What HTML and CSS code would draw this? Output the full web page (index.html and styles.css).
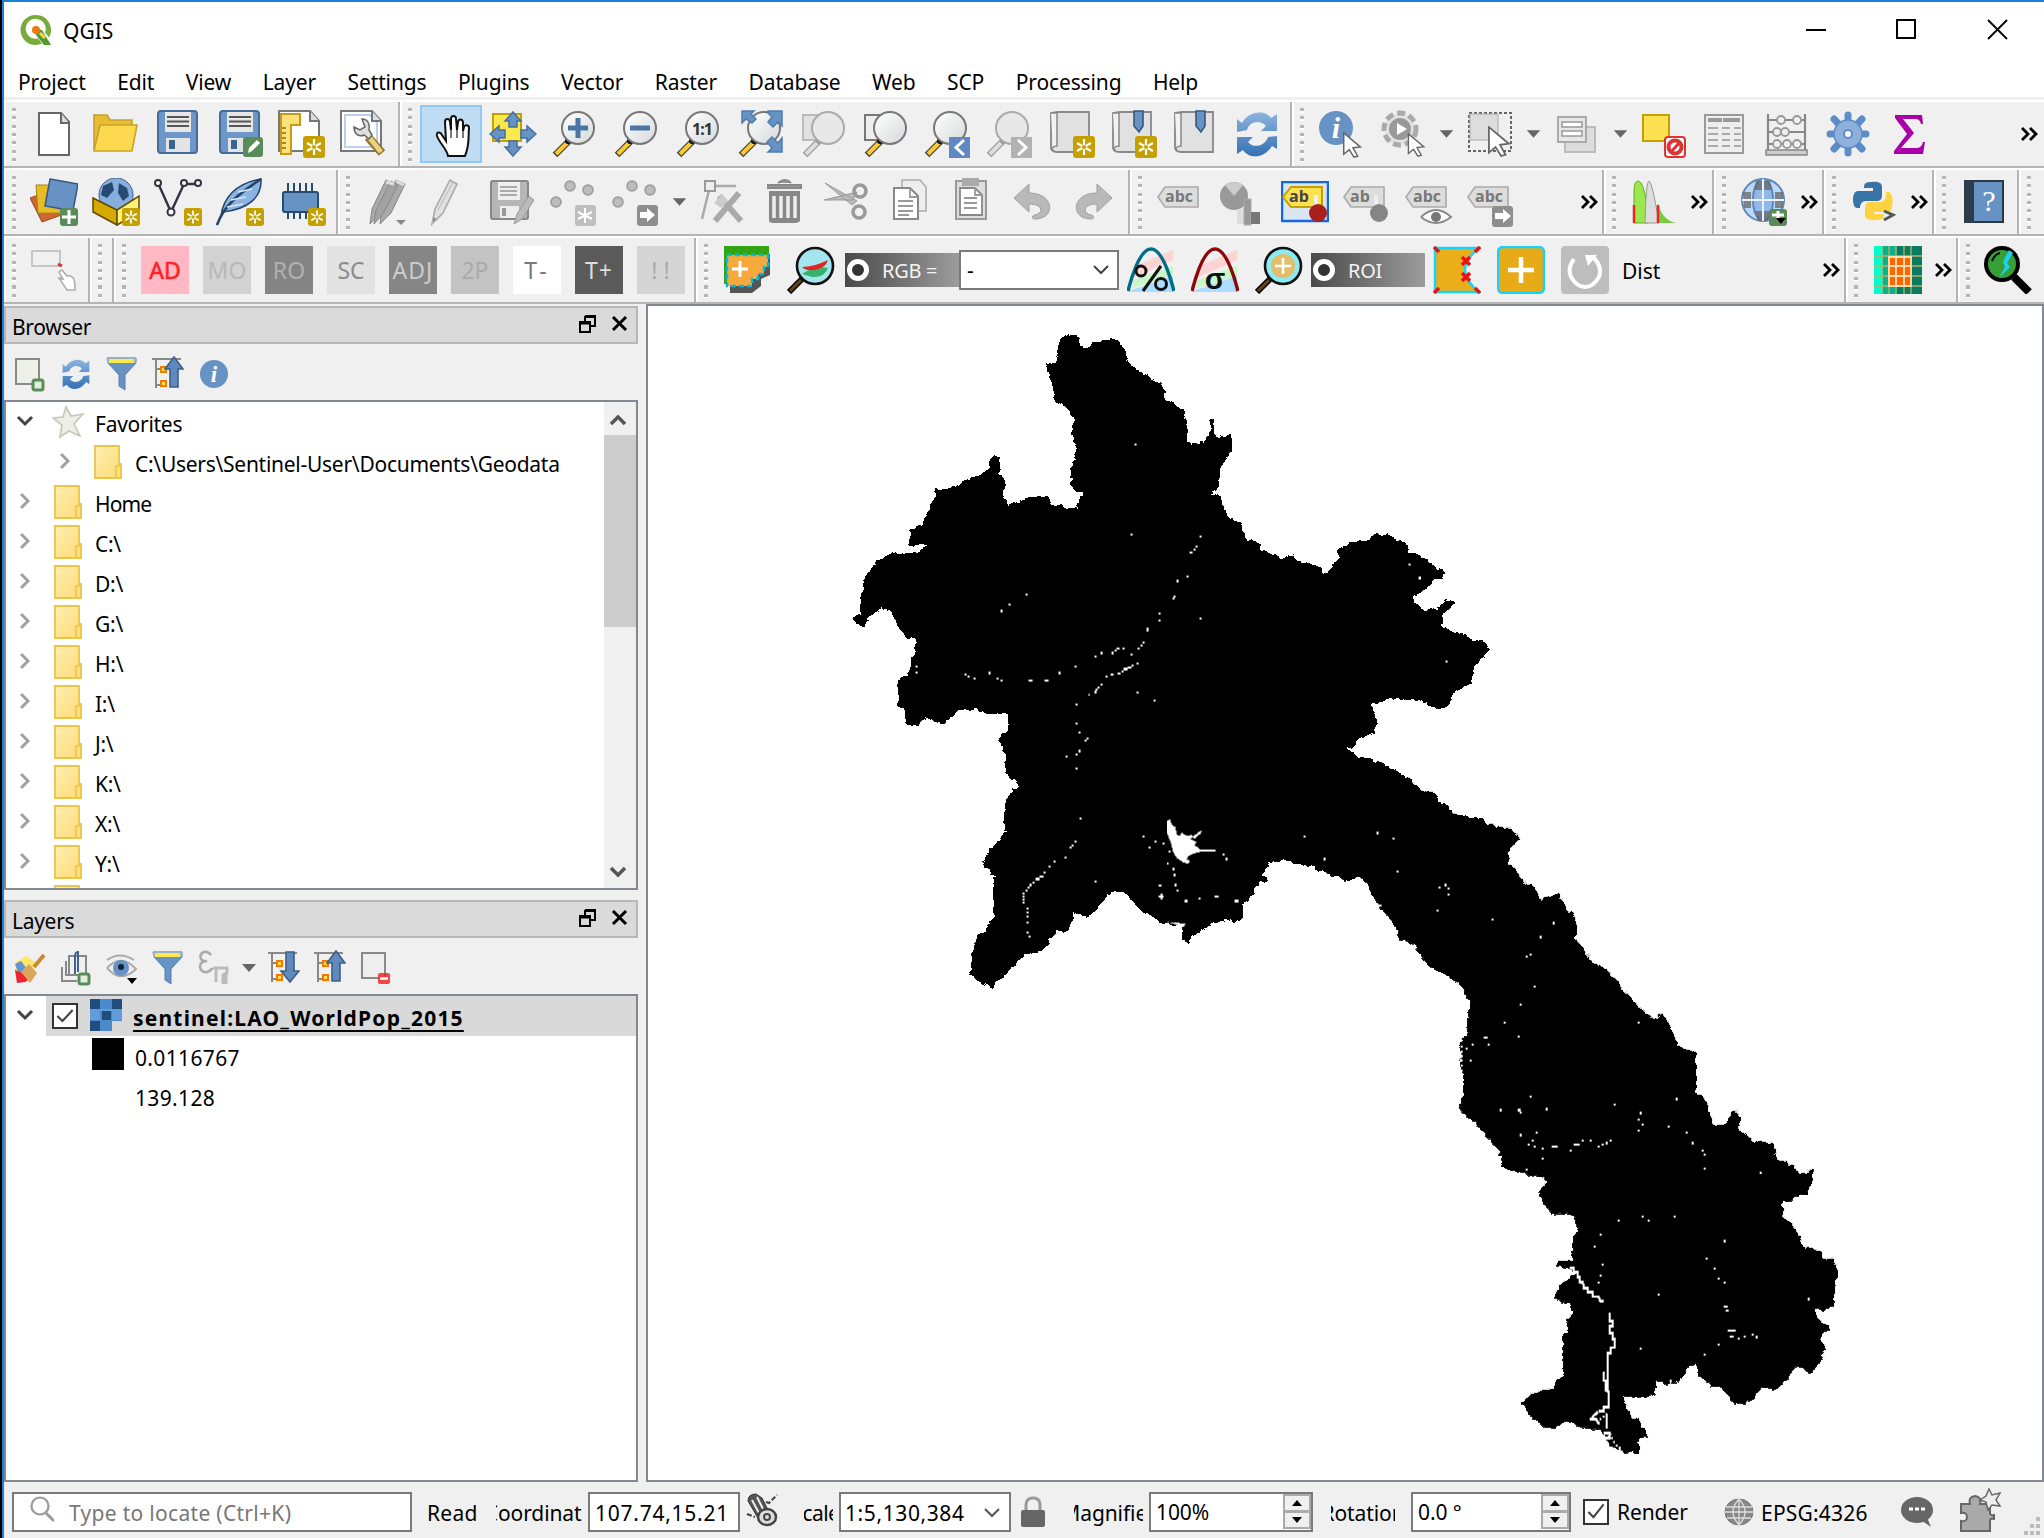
FILE: index.html
```html
<!DOCTYPE html>
<html lang="en">
<head>
<meta charset="utf-8">
<title>QGIS</title>
<link rel="stylesheet" href="styles.css">
</head>
<body>
<svg class="defs" width="0" height="0">
  <linearGradient id="glass" x1="0" y1="0" x2="1" y2="1"><stop offset="0" stop-color="#fff"/><stop offset="1" stop-color="#d5d9da"/></linearGradient>
  <linearGradient id="fold" x1="0" y1="0" x2="1" y2="1"><stop offset="0" stop-color="#ffeeb0"/><stop offset="1" stop-color="#fddc78"/></linearGradient>
  <linearGradient id="blue" x1="0" y1="0" x2="0" y2="1"><stop offset="0" stop-color="#8db4de"/><stop offset="1" stop-color="#3470b4"/></linearGradient>
  <symbol id="star-badge" viewBox="0 0 22 22"><rect width="22" height="22" rx="3" fill="#c4a000"/><path d="M11 3v16M4 7l14 8M18 7L4 15" stroke="#fff" stroke-width="2.2"/><circle cx="11" cy="11" r="2" fill="#c4a000"/></symbol>
  <symbol id="lens" viewBox="0 0 48 48"><path d="M4 45L19 30" stroke="#444" stroke-width="6.5"/><path d="M5 44L16 33" stroke="#fcc92b" stroke-width="4"/><circle cx="17" cy="31" r="3" fill="#111"/><circle cx="27" cy="18" r="16" fill="url(#glass)" stroke="#777" stroke-width="2"/></symbol>
  <symbol id="lens-off" viewBox="0 0 48 48"><path d="M4 45L19 30" stroke="#999" stroke-width="6.5"/><path d="M5 44L16 33" stroke="#ddd" stroke-width="4"/><circle cx="27" cy="18" r="16" fill="#e8e8e8" stroke="#aaa" stroke-width="2"/></symbol>
  <symbol id="floppy" viewBox="0 0 48 48"><rect x="5" y="1" width="39" height="42" rx="3" fill="#6d97c8" stroke="#456c99" stroke-width="2"/><rect x="12" y="2" width="26" height="20" fill="#e7e7e7"/><path d="M14 7h22M14 11.500h22M14 16h22" stroke="#555" stroke-width="1.800"/><rect x="13" y="28" width="24" height="14" fill="#e4e4e4"/><rect x="16" y="30" width="6" height="9" fill="#3b6391"/></symbol>
  <symbol id="page" viewBox="0 0 48 48"><path d="M10 3h22l8 9v33H10z" fill="#fff" stroke="#666" stroke-width="2"/><path d="M32 3v10h8" fill="#ddd" stroke="#666" stroke-width="2"/></symbol>
  <symbol id="refresh" viewBox="0 0 48 48"><path d="M4 22V9l5 4C16 0 33 0 38 8l6-4v17H28l5-5c-6-7-17-4-19 4zM44 26v13l-5-3c-8 13-23 13-29 4l-6 4V27h16l-5 5c6 7 17 4 20-5z" fill="url(#blue)"/></symbol>
  <symbol id="cursor" viewBox="0 0 24 28"><path d="M2 1l18 15-8 1 5 9-4 1-5-8-6 5z" fill="#fff" stroke="#666" stroke-width="1.600"/></symbol>
  <symbol id="map-page" viewBox="0 0 48 48"><path d="M11 2h31v40H11c-8 0-7-5-7-5V3z" fill="#e1e1e1" stroke="#888" stroke-width="1.800"/><path d="M4 3h6v33c-4 0-6 2-4 5" fill="#f2f2f2" stroke="#888" stroke-width="1.500"/></symbol>
  <symbol id="folder" viewBox="0 0 28 34"><path d="M1 1h24v18h2v14H1z" fill="url(#fold)" stroke="#e9c548" stroke-width="1.800"/><path d="M22 33V21h4" fill="none" stroke="#e9c548" stroke-width="1.500"/></symbol>
  <symbol id="funnel" viewBox="0 0 32 36"><path d="M1 2h29v5L19 19v15l-6-4V19L2 7z" fill="#6792c4" stroke="#5680b0"/><path d="M1 1h29v6H1z" fill="#9ab0c4"/><path d="M3 3h25v4H3z" fill="#fce94f"/></symbol>
  <symbol id="tree" viewBox="0 0 32 36"><path d="M0 3h29M4 3v29M4 13h6M4 29h6" stroke="#888" stroke-width="2" fill="none"/><path d="M9 11h5v5H9zM9 25h5v5H9z" fill="#ffe24d" stroke="#f57900" stroke-width="2"/></symbol>
  <symbol id="arrow-up" viewBox="0 0 32 36"><path d="M22 1l9 12h-5v18h-8V13h-5z" fill="#6089bd" stroke="#3c5f8a" stroke-width="1.600"/></symbol>
  <symbol id="label" viewBox="0 0 48 48"><path d="M1 16L8 6h33v20H8z" fill="#ddd" stroke="#aaa" stroke-width="1.600"/></symbol>
  <symbol id="chev" viewBox="0 0 14 18"><path d="M3 2l7 7-7 7" fill="none" stroke="#a2a2a2" stroke-width="3"/></symbol>
  <symbol id="chev-down" viewBox="0 0 18 14"><path d="M2 3l7 7 7-7" fill="none" stroke="#444" stroke-width="3"/></symbol>
  <symbol id="more" viewBox="0 0 18 14"><path d="M2 1l6 6-6 6M10 1l6 6-6 6" fill="none" stroke="#000" stroke-width="2.800"/></symbol>
  <symbol id="dock-btns" viewBox="0 0 52 20"><path d="M6 2h10v10h-5M6 3h10M6 2v5M1 8h10v10H1zM1 9.500h10" fill="none" stroke="#000" stroke-width="2"/><path d="M34 3l13 13M47 3L34 16" stroke="#000" stroke-width="3"/></symbol>
  <symbol id="tri" viewBox="0 0 26 48"><path d="M6 20h14l-7 8z" fill="#666"/></symbol>
</svg>
<div class="window">
  <header class="titlebar">
    <svg class="logo" viewBox="0 0 32 32"><path fill-rule="evenodd" d="M16 1a15 15 0 1 0 6 28.500l-4-5a10 10 0 1 1 7-6l4 5A15 15 0 0 0 16 1z" fill="#76ac37"/><path d="M17 15l5 1 9 15h-7l-8-10z" fill="#589632"/><circle cx="16" cy="16" r="4" fill="#ee7913"/><path d="M20 19l5 5" stroke="#f3d94b" stroke-width="3"/></svg>
    <span class="app-name">QGIS</span>
    <svg class="caption" viewBox="0 0 230 30"><g fill="none" stroke="#000" stroke-width="2"><path d="M10 15h20"/><rect x="101" y="5" width="18" height="18"/><path d="M192 5l19 19M211 5l-19 19" stroke-width="1.800"/></g></svg>
  </header>
  <nav class="menubar"><span>Project</span><span>Edit</span><span>View</span><span>Layer</span><span>Settings</span><span>Plugins</span><span>Vector</span><span>Raster</span><span>Database</span><span>Web</span><span>SCP</span><span>Processing</span><span>Help</span></nav>

  <div class="toolrow">
    <section class="bar w-file">
      <svg class="ic"><use href="#page"/></svg>
      <svg class="ic" viewBox="0 0 48 48"><path d="M3 40V5h13l3 5h22v10" fill="#e6bd35" stroke="#c9a02a" stroke-width="1.600"/><path d="M3 41l6-26h37l-5 26z" fill="#fcd94f" stroke="#c9a22c" stroke-width="1.600"/></svg>
      <svg class="ic"><use href="#floppy"/></svg>
      <svg class="ic" viewBox="0 0 48 48"><use href="#floppy"/><rect x="28" y="27" width="20" height="20" rx="3" fill="#5a8c5a"/><path d="M33 43l1-5 8-8 3 3-8 8z" fill="#fff"/></svg>
      <svg class="ic" viewBox="0 0 48 48"><path d="M2 1h31l9 10v30H2z" fill="#fff" stroke="#777" stroke-width="2"/><path d="M33 1v10h9" fill="#ddd" stroke="#777" stroke-width="2"/><path d="M4 4h19v11h-9v29H4z" fill="#fce07a" stroke="#c99a1a" stroke-width="2"/><path d="M5 18h4M5 23h4M5 28h4M5 33h4M5 38h4" stroke="#8b6a12" stroke-width="1.500"/><use href="#star-badge" x="26" y="26" width="22" height="22"/></svg>
      <svg class="ic" viewBox="0 0 48 48"><path d="M2 1h31l9 10v30H2z" fill="#fff" stroke="#777" stroke-width="2"/><path d="M6 5h25l7 8v24H6z" fill="none" stroke="#bcd0ee" stroke-width="2"/><path d="M33 1v10h9" fill="#ddd" stroke="#777" stroke-width="2"/><path d="M29 27L43 43" stroke="#8b7638" stroke-width="8.500"/><path d="M30 27L42 42" stroke="#efd37c" stroke-width="5"/><path d="M15 17c0 8 6 10 10 8l5 4 3-4-3-5c1-6-1-11-7-11l3 8-5 3z" fill="#dfe0dd" stroke="#666" stroke-width="1.500"/></svg>
    </section>
    <section class="bar w-nav">
      <span class="pressed"><svg class="ic" viewBox="0 0 48 48"><path d="M22 46c-1-7-8-12-11-20-1-4 3-5 5-1l4 6-1-19c0-4 5-4 5 0l1 8V9c0-4 5-4 5 0l1 11 1-8c1-4 5-3 5 1v8l1-4c1-3 5-2 5 1-1 9 1 16-4 28z" transform="translate(-1)" fill="#fff" stroke="#111" stroke-width="2"/><path d="M24 20v8M30 20v8M36 21v7" stroke="#333" stroke-width="1.300"/></svg></span>
      <svg class="ic" viewBox="0 0 48 48"><rect x="4" y="4" width="28" height="27" fill="#fce94f" stroke="#c4a000" stroke-width="2"/><path d="M24 2l8 9h-4v6h-8v-6h-4zM24 46l8-9h-4v-6h-8v6h-4zM1 24l9-8v4h6v8h-6v4zM47 24l-9-8v4h-6v8h6v4z" fill="#6792c4" stroke="#456f9e" stroke-width="1.500"/></svg>
      <svg class="ic" viewBox="0 0 48 48"><use href="#lens"/><path d="M27 8v20M17 18h20" stroke="#4b75a5" stroke-width="5"/></svg>
      <svg class="ic" viewBox="0 0 48 48"><use href="#lens"/><path d="M17 18h20" stroke="#4b75a5" stroke-width="5"/></svg>
      <svg class="ic" viewBox="0 0 48 48"><use href="#lens"/><text x="27" y="25" class="one">1:1</text></svg>
      <svg class="ic" viewBox="0 0 48 48"><use href="#lens"/><path d="M5 1h12l-3 3 5 5-4 4-6-4-4 4zM45 1v15l-4-4-5 5-5-5 4-5-4-4V1zM45 42H31l4-4-5-6 5-5 6 6 4-5z" fill="#6792c4" stroke="#4f7bb0" stroke-width="1.500"/></svg>
      <svg class="ic" viewBox="0 0 48 48"><path d="M4 5h22v25H4z" fill="#e1e1e1" stroke="#bbb" stroke-width="2"/><use href="#lens-off" x="2"/></svg>
      <svg class="ic" viewBox="0 0 48 48"><path d="M4 5h22v25H4z" fill="#eee" stroke="#777" stroke-width="2"/><use href="#lens" x="2"/></svg>
      <svg class="ic" viewBox="0 0 48 48"><use href="#lens"/><rect x="26" y="27" width="21" height="21" fill="#6089c4"/><path d="M41 30l-8 7.500 8 7.500" fill="none" stroke="#fff" stroke-width="3"/></svg>
      <svg class="ic" viewBox="0 0 48 48"><use href="#lens-off"/><rect x="26" y="27" width="21" height="21" fill="#b2b2b2"/><path d="M33 30l8 7.500-8 7.500" fill="none" stroke="#fff" stroke-width="3"/></svg>
      <svg class="ic" viewBox="0 0 48 48"><use href="#map-page"/><use href="#star-badge" x="26" y="26" width="22" height="22"/></svg>
      <svg class="ic" viewBox="0 0 48 48"><use href="#map-page"/><path d="M25 1h9v15l-4 6-5-6z" fill="#6792c4" stroke="#36587f" stroke-width="1.600"/><use href="#star-badge" x="26" y="26" width="22" height="22"/></svg>
      <svg class="ic" viewBox="0 0 48 48"><use href="#map-page"/><path d="M25 1h9v15l-4 6-5-6z" fill="#6792c4" stroke="#36587f" stroke-width="1.600"/></svg>
      <svg class="ic"><use href="#refresh"/></svg>
    </section>
    <section class="bar w-attr">
      <svg class="ic" viewBox="0 0 48 48"><circle cx="19" cy="18" r="17" fill="#6792c4"/><text x="19" y="28" class="info">i</text><use href="#cursor" x="24" y="22" width="24" height="26"/></svg>
      <svg class="ic" viewBox="0 0 48 48"><circle cx="21" cy="19" r="16" fill="#e3e3e3" stroke="#aaa" stroke-width="5" stroke-dasharray="8 4"/><circle cx="21" cy="19" r="11" fill="#999"/><path d="M18 13l10 6-10 6z" fill="#fff"/><use href="#cursor" x="27" y="23" width="22" height="24"/></svg>
      <svg class="dd"><use href="#tri"/></svg>
      <svg class="ic" viewBox="0 0 48 48"><rect x="3" y="3" width="42" height="38" fill="none" stroke="#666" stroke-width="2" stroke-dasharray="3 2"/><path d="M4 4h28v26H4z" fill="#ddd" stroke="#aaa"/><use href="#cursor" x="20" y="16" width="28" height="31"/></svg>
      <svg class="dd"><use href="#tri"/></svg>
      <svg class="ic" viewBox="0 0 48 48"><path d="M12 17h30v25H12z" fill="#ddd" stroke="#bbb" stroke-width="2"/><path d="M5 7h28v25H5z" fill="#e6e6e6" stroke="#aaa" stroke-width="2"/><path d="M9 12h20v5H9zM9 21h20v5H9z" fill="#fff" stroke="#999" stroke-width="1.500"/></svg>
      <svg class="dd"><use href="#tri"/></svg>
      <svg class="ic" viewBox="0 0 48 48"><path d="M3 5h26v26H3z" fill="#fce250" stroke="#c4a000" stroke-width="2"/><rect x="25" y="27" width="20" height="20" rx="3" fill="#fff" stroke="#d33" stroke-width="2"/><circle cx="35" cy="37" r="6.500" fill="none" stroke="#d33" stroke-width="4"/><path d="M31 42l9-10" stroke="#d33" stroke-width="3"/></svg>
      <svg class="ic" viewBox="0 0 48 48"><path d="M3 5h38v38H3z" fill="#eee" stroke="#999" stroke-width="2"/><path d="M6 8h14v4H6zM21 8h17v4H21z" fill="#999"/><path d="M6 18h10M20 18h8M32 18h7M6 24h10M20 24h8M32 24h7M6 30h10M20 30h8M32 30h7M6 36h10M20 36h8M32 36h7" stroke="#aaa" stroke-width="2"/></svg>
      <svg class="ic" viewBox="0 0 48 48"><path d="M4 4v38M41 4v38M4 10h37M4 22h37M4 34h37" stroke="#888" stroke-width="2.200"/><path d="M2 40h41v5H2z" fill="#ccc" stroke="#888" stroke-width="1.500"/><g fill="#eee" stroke="#999" stroke-width="1.800"><circle cx="17" cy="10" r="4"/><circle cx="33" cy="10" r="4"/><circle cx="13" cy="22" r="4"/><circle cx="21" cy="22" r="4"/><circle cx="13" cy="34" r="4"/><circle cx="23" cy="34" r="4"/><circle cx="33" cy="34" r="4"/></g></svg>
      <svg class="ic" viewBox="0 0 48 48"><g stroke="#5d8cc8" stroke-width="7"><path d="M22 5v38M4 24h36M8 9l28 30M36 9L8 39" stroke-linecap="round"/></g><circle cx="22" cy="24" r="14" fill="#8fb0da" stroke="#5d8cc8" stroke-width="1.500"/><circle cx="22" cy="24" r="4" fill="#fff" stroke="#5d8cc8" stroke-width="2"/></svg>
      <svg class="ic" viewBox="0 0 48 48"><path d="M7 5h27l1 9h-2c-1-4-3-5-6-5H15l11 14-13 15h15c4 0 6-2 7-6h2l-2 12H6v-3l13-17L7 8z" fill="#aa00a8"/></svg>
      <svg class="more"><use href="#more"/></svg>
    </section>
  </div>

  <div class="toolrow">
    <section class="bar w-src">
      <svg class="ic" viewBox="0 0 48 48"><path d="M0 20l25-9 12 24-25 9z" fill="#cf6531" stroke="#9c4a22"/><path d="M6 7h25v28H8z" fill="#e6bd28" stroke="#a98612"/><path d="M20 1l28 5-5 27-28-5z" fill="#6792c4" stroke="#36587f" stroke-width="1.500"/><rect x="30" y="30" width="18" height="18" rx="3" fill="#5a8c5a"/><path d="M39 32v14M32 39h14" stroke="#fff" stroke-width="3"/></svg>
      <svg class="ic" viewBox="0 0 48 48"><circle cx="24" cy="17" r="17" fill="#86afe0" stroke="#3c6391"/><path d="M11 8l9-4 2 8-7 8-6-3zM27 5l8 5 2 8-6 5-5-8z" fill="#264a70"/><path d="M1 20l24 12v15L1 34z" fill="#d4a900" stroke="#5f4b00" stroke-width="1.500"/><path d="M25 32l22-14v16L25 47z" fill="#fdf27a" stroke="#5f4b00" stroke-width="1.500"/><use href="#star-badge" x="30" y="30" width="18" height="18"/></svg>
      <svg class="ic" viewBox="0 0 48 48"><path d="M4 5l13 29L30 6h14" fill="none" stroke="#334" stroke-width="2.400"/><g fill="#fff" stroke="#334" stroke-width="2"><circle cx="4" cy="5" r="3"/><circle cx="17" cy="34" r="3.500"/><circle cx="30" cy="5" r="3"/><circle cx="44" cy="5" r="3"/></g><use href="#star-badge" x="30" y="30" width="18" height="18"/></svg>
      <svg class="ic" viewBox="0 0 48 48"><path d="M5 38C7 20 20 5 45 1c1 18-12 30-38 33" fill="#8ab3e0" stroke="#24456b" stroke-width="1.500"/><path d="M1 47C8 27 24 15 45 1" fill="none" stroke="#24456b" stroke-width="2.500"/><path d="M15 22l15-3M11 29l16-3M22 14l14-3" stroke="#dbe9f8" stroke-width="1.500"/><use href="#star-badge" x="30" y="30" width="18" height="18"/></svg>
      <svg class="ic" viewBox="0 0 48 48"><path d="M10 5v36M16 5v36M22 5v36M28 5v36M34 5v36" stroke="#234b73" stroke-width="2"/><rect x="5" y="14" width="35" height="20" rx="2" fill="#6792c4" stroke="#234b73" stroke-width="2"/><use href="#star-badge" x="30" y="30" width="18" height="18"/></svg>
    </section>
    <section class="bar w-edit">
      <svg class="ic" viewBox="0 0 48 48"><path d="M6 46l2-15L22 2l8 4-14 29zM16 46l2-15L32 2l9 4-14 29z" fill="#aaa" stroke="#858585"/><path d="M10 46l2-14L27 3l7 4-15 29z" fill="#a2a2a2" stroke="#8a8a8a"/><path d="M22 4l8 2M32 3l8 4" stroke="#ddd" stroke-width="3"/><path d="M32 42h10l-5 5z" fill="#888"/></svg>
      <svg class="ic" viewBox="0 0 48 48"><path d="M6 46l3-15L24 2l7 4-14 29z" fill="#e0e0e0" stroke="#aaa" stroke-width="1.600"/><path d="M6 46l1-7 4 2zM12 32L27 4" fill="#888" stroke="#bbb"/></svg>
      <svg class="ic" viewBox="0 0 48 48"><rect x="3" y="3" width="37" height="38" rx="2" fill="#b6b6b6" stroke="#888" stroke-width="2"/><path d="M10 4h22v18H10zM12 28h19v12H12z" fill="#eee"/><path d="M12 9h17M12 13h17M12 17h17" stroke="#aaa" stroke-width="2"/><path d="M14 30h4v8h-4z" fill="#999"/><path d="M26 46l3-10 12-18 5 4-12 19z" fill="#bbb" stroke="#999"/></svg>
      <svg class="ic" viewBox="0 0 48 48"><g fill="#bcbcbc" stroke="#999" stroke-width="1.500"><circle cx="20" cy="8" r="5"/><circle cx="38" cy="12" r="5"/><circle cx="6" cy="24" r="5"/></g><rect x="25" y="27" width="21" height="21" rx="3" fill="#bfbfbf"/><path d="M35 30v15M28 34l14 7M42 34l-14 7" stroke="#fff" stroke-width="2"/></svg>
      <svg class="ic" viewBox="0 0 48 48"><g fill="#bcbcbc" stroke="#999" stroke-width="1.500"><circle cx="20" cy="8" r="5"/><circle cx="38" cy="12" r="5"/><circle cx="6" cy="24" r="5"/></g><rect x="25" y="27" width="21" height="21" rx="3" fill="#8e8e8e"/><path d="M28 34h7v-4l8 7-8 7v-4h-7z" fill="#fff"/></svg>
      <svg class="dd"><use href="#tri"/></svg>
      <svg class="ic" viewBox="0 0 48 48"><path d="M11 8L3 41M11 8h26" stroke="#aaa" stroke-width="2.500"/><path d="M6 3h10v10H6z" fill="#eee" stroke="#999" stroke-width="2"/><path d="M16 43l24-28M20 18l22 25" stroke="#aaa" stroke-width="6"/><path d="M15 25l8-9 6 7-7 7z" fill="#ccc"/></svg>
      <svg class="ic" viewBox="0 0 48 48"><path d="M8 13h31v30q-2 2-5 2H13q-4 0-5-2z" fill="#888"/><path d="M13 18v22M20 18v22M27 18v22M34 18v22" stroke="#eee" stroke-width="3.500"/><path d="M7 7h33v3H7zM17 5q7-6 13 0" fill="#999" stroke="#888" stroke-width="2"/></svg>
      <svg class="ic" viewBox="0 0 48 48"><path d="M2 5l32 18-5 4zM1 22l33-8-4 8z" fill="#bbb" stroke="#999"/><g fill="none" stroke="#999" stroke-width="3.500"><circle cx="37" cy="13" r="6"/><circle cx="36" cy="34" r="6"/></g></svg>
      <svg class="ic" viewBox="0 0 48 48"><path d="M17 2h18l6 7v24H17z" fill="#eee" stroke="#aaa" stroke-width="1.500"/><path d="M9 10h16l8 8v23H9z" fill="#fff" stroke="#888" stroke-width="2"/><path d="M25 10v9h8M13 23h15M13 28h15M13 33h15M13 37h11" fill="none" stroke="#999" stroke-width="1.800"/></svg>
      <svg class="ic" viewBox="0 0 48 48"><path d="M9 3h30v38H9z" fill="#ddd" stroke="#999" stroke-width="2"/><path d="M15 0h17v8H15z" fill="#aaa"/><path d="M13 10h15l7 7v20H13z" fill="#fff" stroke="#888" stroke-width="1.800"/><path d="M17 20h13M17 25h13M17 30h13M28 10v7h7" fill="none" stroke="#999" stroke-width="1.800"/></svg>
      <svg class="ic" viewBox="0 0 48 48"><path d="M5 20L20 6v9c26 0 27 26 6 26-4 0-3-4 0-4 9-2 8-11-6-11v8z" fill="#b9b9b9" stroke="#a0a0a0"/></svg>
      <svg class="ic" viewBox="0 0 48 48"><path d="M41 20L26 6v9C0 15-1 41 20 41c4 0 3-4 0-4-9-2-8-11 6-11v8z" fill="#b9b9b9" stroke="#a0a0a0"/></svg>
    </section>
    <section class="bar w-label">
      <svg class="ic" viewBox="0 0 48 48"><use href="#label"/><text x="22" y="21" class="abc">abc</text></svg>
      <svg class="ic" viewBox="0 0 48 48"><circle cx="15" cy="15" r="14" fill="#999"/><path d="M15 15L6 4q9-6 18 0z" fill="#ccc"/><path d="M18 28h7v15h-7z" fill="#ddd"/><path d="M25 18h7v26h-7z" fill="#999" stroke="#aaa"/><path d="M32 31h9v12h-9z" fill="#777"/></svg>
      <svg class="ic" viewBox="0 0 48 48"><rect x="1" y="1" width="46" height="39" fill="#dce6f2" stroke="#1268e0" stroke-width="2.500"/><path d="M2 16l8-10h31v20H10z" fill="#fce250" stroke="#c4a000" stroke-width="2"/><text x="18" y="21" class="abc on">ab</text><path d="M35 29V14" stroke="#eee" stroke-width="4"/><circle cx="37" cy="32" r="9" fill="#a8201e"/></svg>
      <svg class="ic" viewBox="0 0 48 48"><use href="#label"/><text x="17" y="21" class="abc">ab</text><path d="M33 29V14" stroke="#eee" stroke-width="4"/><circle cx="36" cy="32" r="9" fill="#858585"/></svg>
      <svg class="ic" viewBox="0 0 48 48"><use href="#label"/><text x="22" y="21" class="abc">abc</text><path d="M16 36q15-14 30 0-15 12-30 0" fill="#fff" stroke="#888" stroke-width="2"/><circle cx="31" cy="36" r="5" fill="#777"/></svg>
      <svg class="ic" viewBox="0 0 48 48"><use href="#label"/><text x="22" y="21" class="abc">abc</text><rect x="25" y="25" width="21" height="21" rx="3" fill="#8e8e8e"/><path d="M28 32h8v-4l8 7-8 7v-4h-8z" fill="#fff"/></svg>
      <svg class="more"><use href="#more"/></svg>
    </section>
    <section class="bar w-plug">
      <svg class="ic" viewBox="0 0 48 48"><path d="M5 45V14q0-11 4-11 8 1 10 42z" fill="#9be84e" stroke="#6a2"/><path d="M16 45q1-42 4-42t10 42z" fill="#ddd" stroke="#999"/><path d="M29 25q4 17 18 20H29z" fill="#7c4"/><path d="M5 27v18M29 27v18" stroke="#e22" stroke-width="2.500"/></svg>
      <svg class="more"><use href="#more"/></svg>
    </section>
    <section class="bar w-plug">
      <svg class="ic" viewBox="0 0 48 48"><circle cx="24" cy="22" r="21" fill="#bcd8f8" stroke="#5e87b8" stroke-width="2"/><ellipse cx="24" cy="22" rx="10" ry="21" fill="#8fb9ea" stroke="#5e87b8" stroke-width="2"/><path d="M17 3h14l2 9H15zM16 33h16l-3 10H19zM4 14h8v16H5zM36 14h8v16h-8z" fill="#666" opacity=".75"/><path d="M3 22h42M24 1v42" stroke="#eaf3fd" stroke-width="2"/><rect x="30" y="31" width="18" height="17" rx="3" fill="#5a8c5a"/><path d="M39 33v8M33 37h12" stroke="#fff" stroke-width="3"/><path d="M37 40h10l-5 6z" fill="#000"/></svg>
      <svg class="more"><use href="#more"/></svg>
    </section>
    <section class="bar w-plug">
      <svg class="ic" viewBox="0 0 48 48"><path d="M22 4c9-1 11 2 11 5v8c0 6-3 6-7 6h-9c-4 0-6 3-6 7H8c-5 0-6-17 1-17h15v-3h-9c0-4 1-6 7-6z" fill="#3873a5"/><path d="M27 42c-9 1-11-2-11-5v-7c0-6 3-6 7-6h8c4 0 6-3 6-10h3c5 2 5 20-1 20H25v2h10c0 4-1 6-8 6z" fill="#fdd340"/><path d="M35 33l9 4-9 5" fill="none" stroke="#555" stroke-width="3"/></svg>
      <svg class="more"><use href="#more"/></svg>
    </section>
    <section class="bar w-help"><svg class="ic" viewBox="0 0 48 48"><path d="M5 3h38v41H5z" fill="#6792c4" stroke="#2d3742" stroke-width="2"/><path d="M4 2h10v43H4z" fill="#2d3b4a"/><text x="29" y="33" class="help">?</text></svg></section>
    <section class="bar w-end"></section>
  </div>

  <div class="toolrow">
    <section class="bar w-ptr"><svg class="ic" viewBox="0 0 48 48"><path d="M3 5h28v15H3z" fill="none" stroke="#c6c6c6" stroke-width="2"/><path d="M29 18l4 2" stroke="#c33" stroke-width="3"/><path d="M33 24l5 6c6-1 8 3 8 11v3h-8l-8-12 4 1-4-7z" fill="#fff" stroke="#aaa" stroke-width="1.500"/></svg></section>
    <section class="bar w-thin"></section>
    <section class="bar w-scp">
      <span class="tile t-ad">AD</span><span class="tile t-mo">MO</span><span class="tile t-ro">RO</span><span class="tile t-sc">SC</span><span class="tile t-adj">ADJ</span><span class="tile t-2p">2P</span><span class="tile t-tm">T-</span><span class="tile t-tp">T+</span><span class="tile t-ex">!!</span>
    </section>
    <section class="bar w-roi">
      <svg class="ic" viewBox="0 0 48 48"><path d="M7 8h40v21l-9 4v7l-9 7H7z" fill="#555"/><path d="M1 0h45v9H9v29H1z" fill="#34a512"/><path d="M4 9h41v12h-4v7h-6v5h-6v7H4z" fill="#f9a83c" stroke="#0bd" stroke-width="2.500" stroke-dasharray="5 3"/><path d="M17 15v16M9 23h16" stroke="#fff" stroke-width="3"/></svg>
      <svg class="ic" viewBox="0 0 48 48"><path d="M2 46L16 32" stroke="#000" stroke-width="6"/><path d="M3 45l11-11" stroke="#641" stroke-width="3"/><circle cx="28" cy="20" r="18" fill="#a5e5ef" stroke="#111" stroke-width="2.600"/><path d="M15 28q13-9 26-6-4 10-16 9z" fill="#35b36a"/><path d="M15 21q12 0 26-7-2 8-14 10-8 1-12-3z" fill="#e02424"/></svg>
      <span class="dark"><i class="radio"></i>RGB =</span>
      <span class="combo w-rgb">-<svg viewBox="0 0 18 14"><path d="M2 3l7 7 7-7" fill="none" stroke="#444" stroke-width="2"/></svg></span>
      <svg class="ic" viewBox="0 0 48 48"><path d="M2 45L46 30v16H2z" fill="#adf"/><path d="M8 20L46 4v10L6 32z" fill="#fcd4d4"/><path d="M6 34L46 20v10L6 42z" fill="#c9f7c9"/><path d="M1 45Q12 3 24 3t23 42" fill="none" stroke="#006e86" stroke-width="3.500"/><g fill="none" stroke="#111" stroke-width="3"><circle cx="14" cy="25" r="5"/><circle cx="34" cy="38" r="5.500"/><path d="M34 20L16 45"/></g></svg>
      <svg class="ic" viewBox="0 0 48 48"><path d="M2 45L46 30v16H2z" fill="#adf"/><path d="M8 20L46 4v10L6 32z" fill="#fcd4d4"/><path d="M6 34L46 20v10L6 42z" fill="#c9f7c9"/><path d="M1 45Q12 3 24 3t23 42" fill="none" stroke="#8a0808" stroke-width="3.500"/><text x="24" y="43" class="pct">σ</text></svg>
      <svg class="ic" viewBox="0 0 48 48"><path d="M2 46L16 32" stroke="#000" stroke-width="6"/><path d="M3 45l11-11" stroke="#641" stroke-width="3"/><circle cx="28" cy="20" r="18" fill="#8eeaf2" stroke="#111" stroke-width="2.600"/><circle cx="28" cy="20" r="12" fill="#e4bd68"/><path d="M28 12v16M20 20h16" stroke="#fff" stroke-width="2.600"/></svg>
      <span class="dark roi"><i class="radio"></i>ROI</span>
      <svg class="ic" viewBox="0 0 48 48"><path d="M2 2h44q-28 22 0 44H2z" fill="#eaae18" stroke="#15d3ff" stroke-width="2.500"/><path d="M1 1l5 5M47 1l-5 5M1 47l5-5M47 47l-5-5M29 11l8 8M37 11l-8 8M29 27l8 8M37 27l-8 8" stroke="#e11" stroke-width="3.500"/></svg>
      <svg class="ic" viewBox="0 0 48 48"><rect x="1" y="1" width="46" height="46" rx="5" fill="#e8ab18" stroke="#15d3ff" stroke-width="2.500"/><path d="M24 11v26M11 24h26" stroke="#fff" stroke-width="4.500"/></svg>
      <svg class="ic" viewBox="0 0 48 48"><rect width="48" height="48" rx="4" fill="#bdbdbd"/><path d="M13 13q-7 9-3 18 6 10 14 10t14-10q4-11-7-21" fill="none" stroke="#fff" stroke-width="4"/><path d="M24 9h12l-9 11z" fill="#fff"/></svg>
      <span class="dist">Dist</span>
      <svg class="more"><use href="#more"/></svg>
    </section>
    <section class="bar w-plug3"><svg class="ic" viewBox="0 0 48 48"><path d="M0 0h48v48H0z" fill="#0a7d60"/><path d="M0 0h9v48H0z" fill="#0fc"/><path d="M9 0h14v48H9z" fill="#0cb088"/><path d="M15 11h22v29H15z" fill="#f60"/><path d="M0 10h48M0 20h48M0 30h48M0 40h48M8 0v48M15 0v48M22 0v48M30 0v48M37 0v48" stroke="#b5b06a" stroke-width="1.300"/><path d="M15 11h22v29H15zM15 20h22M15 30h22M22 11v29M30 11v29" fill="none" stroke="#ffe0b0" stroke-width="1.800"/></svg><svg class="more"><use href="#more"/></svg></section>
    <section class="bar w-last"><svg class="ic" viewBox="0 0 48 48"><path d="M30 31l15 15" stroke="#000" stroke-width="8"/><circle cx="18" cy="18" r="16" fill="#35a035" stroke="#000" stroke-width="4"/><path d="M25 4l-6 12 2 5-6 11 11-11-3-4 6-10z" fill="#1bd0f0"/><path d="M8 15q3-7 8-8" stroke="#000" stroke-width="2" fill="none"/></svg></section>
  </div>

  <main class="work">
    <aside class="docks">
      <section class="dock browser">
        <h2>Browser<svg class="dockbtns"><use href="#dock-btns"/></svg></h2>
        <div class="docktools">
          <svg viewBox="0 0 32 36"><path d="M2 3h23v25H2z" fill="#eef0ea" stroke="#888a85" stroke-width="2"/><rect x="19" y="24" width="10" height="10" rx="2" fill="#dfeedd" stroke="#5a8c5a" stroke-width="3"/></svg>
          <svg><use href="#refresh"/></svg>
          <svg><use href="#funnel"/></svg>
          <svg viewBox="0 0 32 36"><use href="#tree"/><use href="#arrow-up"/></svg>
          <svg viewBox="0 0 32 36"><circle cx="16" cy="18" r="14" fill="#6792c4"/><text x="16" y="26" class="info-s">i</text></svg>
        </div>
        <div class="tree">
          <div class="rows">
            <div class="row"><svg class="exp"><use href="#chev-down"/></svg><svg class="fi" viewBox="0 0 32 32"><path d="M14 1l5 9 12-2-9 10 6 12-11-5-9 6 2-12L1 12l10-1z" fill="#eeeee8" stroke="#c5c8b4" stroke-width="1.600"/></svg><span>Favorites</span></div>
            <div class="row sub"><svg class="exp"><use href="#chev"/></svg><svg class="fi"><use href="#folder"/></svg><span>C:\Users\Sentinel-User\Documents\Geodata</span></div>
            <div class="row"><svg class="exp"><use href="#chev"/></svg><svg class="fi"><use href="#folder"/></svg><span class="tight">Home</span></div>
            <div class="row"><svg class="exp"><use href="#chev"/></svg><svg class="fi"><use href="#folder"/></svg><span>C:\</span></div>
            <div class="row"><svg class="exp"><use href="#chev"/></svg><svg class="fi"><use href="#folder"/></svg><span>D:\</span></div>
            <div class="row"><svg class="exp"><use href="#chev"/></svg><svg class="fi"><use href="#folder"/></svg><span>G:\</span></div>
            <div class="row"><svg class="exp"><use href="#chev"/></svg><svg class="fi"><use href="#folder"/></svg><span>H:\</span></div>
            <div class="row"><svg class="exp"><use href="#chev"/></svg><svg class="fi"><use href="#folder"/></svg><span>I:\</span></div>
            <div class="row"><svg class="exp"><use href="#chev"/></svg><svg class="fi"><use href="#folder"/></svg><span>J:\</span></div>
            <div class="row"><svg class="exp"><use href="#chev"/></svg><svg class="fi"><use href="#folder"/></svg><span>K:\</span></div>
            <div class="row"><svg class="exp"><use href="#chev"/></svg><svg class="fi"><use href="#folder"/></svg><span>X:\</span></div>
            <div class="row"><svg class="exp"><use href="#chev"/></svg><svg class="fi"><use href="#folder"/></svg><span>Y:\</span></div>
            <div class="row"><svg class="exp"></svg><svg class="fi"><use href="#folder"/></svg></div>
          </div>
          <div class="scroll"><svg viewBox="0 0 30 33"><path d="M8 22l7-7 7 7" fill="none" stroke="#555" stroke-width="3.500"/></svg><i></i><svg viewBox="0 0 30 33"><path d="M8 13l7 7 7-7" fill="none" stroke="#555" stroke-width="3.500"/></svg></div>
        </div>
      </section>
      <section class="dock layers">
        <h2>Layers<svg class="dockbtns"><use href="#dock-btns"/></svg></h2>
        <div class="docktools">
          <svg viewBox="0 0 32 36"><path d="M2 12l10-6 10 7-4 14-14 4-3-9z" fill="#fce86a"/><path d="M1 14l6-3 6 8-8 6z" fill="#5f94d6"/><path d="M1 20l9 4 9 3-8 5-8 1z" fill="#e23"/><path d="M15 14l8 9-7 10-9-11z" fill="#dba55a"/><path d="M20 17L30 5" stroke="#c98b3a" stroke-width="4"/></svg>
          <svg viewBox="0 0 32 36"><path d="M2 17v14h15M6 11v14h15M9 6h17v19H9z" fill="none" stroke="#888" stroke-width="2"/><path d="M15 24V7q0-5 3-5v20" fill="none" stroke="#3c6391" stroke-width="2"/><rect x="19" y="24" width="10" height="10" rx="2" fill="#dfeedd" stroke="#5a8c5a" stroke-width="3"/></svg>
          <svg viewBox="0 0 32 36"><path d="M1 18q14-15 29 1-15 15-29-1M1 10q13-9 27 0" fill="#eee" stroke="#aaa" stroke-width="2"/><circle cx="15" cy="18" r="8" fill="#6792c4"/><circle cx="15" cy="17" r="3" fill="#123"/><path d="M21 28h10l-5 6z"/></svg>
          <svg><use href="#funnel"/></svg>
          <svg viewBox="0 0 32 36"><path d="M13 5Q10 1 6 2 1 4 3 9q2 3 6 2-7 0-7 6 1 6 7 5 4-1 5-4" fill="none" stroke="#aaa" stroke-width="2.500"/><path d="M15 18h14v5l-4 2v9M18 18v14M28 22v12" fill="none" stroke="#bbb" stroke-width="3"/></svg>
          <svg class="dd"><use href="#tri"/></svg>
          <svg viewBox="0 0 32 36"><use href="#tree"/><path d="M22 32l9-11h-5V2h-8v19h-5z" fill="#6089bd" stroke="#3c5f8a" stroke-width="1.600"/></svg>
          <svg viewBox="0 0 32 36"><use href="#tree"/><use href="#arrow-up"/></svg>
          <svg viewBox="0 0 32 36"><path d="M2 3h23v25H2z" fill="#eee" stroke="#888a85" stroke-width="2"/><rect x="18" y="23" width="12" height="11" rx="2" fill="#ef2929" opacity=".85"/><path d="M20 28.500h8" stroke="#fff" stroke-width="2.500"/></svg>
        </div>
        <div class="tree">
          <div class="rows">
            <div class="row layer"><svg class="exp"><use href="#chev-down"/></svg><div class="sel"><span class="check"><svg viewBox="0 0 26 26"><path d="M4 13l6 6L22 6" fill="none" stroke="#444" stroke-width="2.500"/></svg></span><svg class="raster" viewBox="0 0 32 32"><path d="M0 0h32v22H22v10H0z" fill="#4a8aca"/><path d="M0 0h10v10H0zM22 0h10v10H22zM12 12h9v9h-9zM0 22h10v10H0z" fill="#1f4e7c"/><path d="M10 10h12v2H10zM0 10h10v11H0zM22 10h10v11H22z" fill="#629ddb"/></svg><b>sentinel:LAO_WorldPop_2015</b></div></div>
            <div class="row legend"><i class="swatch"></i><span>0.0116767</span></div>
            <div class="row legend"><i></i><span>139.128</span></div>
          </div>
        </div>
      </section>
    </aside>
    <section class="canvas">
      <svg class="map" viewBox="648 306 1394 1174">
        <defs><filter id="coast" x="-2%" y="-2%" width="104%" height="104%"><feTurbulence type="fractalNoise" baseFrequency=".14" numOctaves="2" seed="4"/><feDisplacementMap in="SourceGraphic" scale="7" xChannelSelector="R" yChannelSelector="G"/></filter></defs>
        <g filter="url(#coast)" shape-rendering="crispEdges">
          <path transform="translate(840 320) scale(.43367)" d="M512 42L525 33L545 36L562 65L576 64L578 52L606 50L616 43L640 47L662 78L662 92L690 118L722 137L742 150L752 170L753 185L790 207L801 235L803 275L810 285L835 282L852 266L853 228L861 228L864 264L890 268L903 262L903 303L875 345L875 385L855 402L878 408L883 430L900 460L918 465L942 508L968 515L975 533L1020 548L1046 540L1055 556L1082 560L1120 581L1130 578L1133 563L1145 560L1150 527L1175 512L1220 508L1238 492L1275 500L1303 512L1310 532L1355 553L1376 573L1396 578L1390 597L1370 600L1355 620L1325 636L1322 650L1348 672L1385 660L1400 642L1416 656L1390 675L1390 712L1430 722L1470 740L1485 740L1501 760L1460 802L1455 840L1420 855L1399 893L1370 895L1335 873L1310 877L1280 872L1225 885L1238 930L1225 955L1200 965L1170 990L1190 1005L1235 1015L1300 1050L1345 1087L1365 1090L1420 1140L1480 1150L1520 1180L1530 1568L1460 1568L1430 1530L1352 1485L1325 1435L1290 1420L1270 1380L1240 1345L1220 1300L1195 1283L1170 1292L1120 1275L1080 1258L1025 1248L990 1252L975 1280L992 1292L965 1297L950 1325L930 1350L928 1380L915 1390L900 1382L860 1390L830 1412L810 1420L808 1436L788 1432L790 1393L750 1391L700 1365L655 1318L625 1320L600 1345L575 1375L540 1368L525 1410L500 1412L465 1455L430 1465L385 1502L350 1543L300 1510L308 1440L315 1418L335 1410L355 1375L352 1290L358 1283L327 1253L340 1230L387 1180L378 1165L380 1110L410 1072L384 1045L378 985L362 967L386 945L388 908L340 908L320 897L275 896L238 933L195 918L180 938L150 934L147 900L135 895L130 845L135 828L158 820L160 795L173 760L178 733L156 735L138 715L120 675L95 660L73 683L54 708L34 700L32 682L45 678L48 630L60 590L85 555L120 537L175 538L200 520L160 519L162 488L190 470L210 430L222 390L258 388L340 345L352 315L369 316L368 352L381 370L378 400L388 428L430 411L480 407L490 428L512 424L518 436L545 436L558 402L532 385L533 338L548 296L535 262L540 232L523 200L495 192L490 152L472 102L495 98Z"/>
          <path transform="translate(1340 780) scale(.33333 .44)" d="M-60 -80L215 0L230 18L280 28L285 45L365 86L410 90L437 98L515 112L538 133L510 155L505 190L530 204L548 232L585 243L605 272L655 260L690 298L712 327L705 358L760 415L800 428L870 495L940 545L967 530L983 550L1015 605L1067 620L1067 710L1105 740L1117 787L1155 782L1185 752L1198 765L1195 790L1235 820L1300 825L1310 865L1350 872L1385 895L1421 886L1408 938L1328 962L1330 990L1375 1030L1393 1063L1440 1068L1450 1087L1480 1088L1492 1117L1485 1160L1478 1200L1428 1205L1430 1222L1475 1247L1440 1268L1455 1295L1435 1325L1413 1350L1365 1332L1345 1360L1310 1387L1265 1380L1230 1413L1185 1420L1145 1380L1110 1378L1078 1353L1070 1330L1045 1332L1020 1368L980 1374L950 1365L943 1400L850 1403L870 1445L895 1455L922 1490L893 1505L893 1531L850 1528L810 1515L780 1478L740 1475L680 1460L642 1472L612 1473L563 1440L548 1412L575 1395L633 1382L668 1350L668 1260L687 1240L680 1225L700 1212L685 1190L643 1178L655 1150L690 1130L705 1118L685 1110L645 1105L660 1093L695 1093L700 1050L715 1015L690 988L640 987L612 965L597 935L625 915L610 903L560 898L485 880L475 840L440 812L405 778L362 755L370 700L362 640L358 605L382 575L390 500L350 458L260 420L220 372L180 362L155 320L110 280L75 230L35 215L20 230L-40 205Z"/>
        </g>
        <g fill="#fff" shape-rendering="crispEdges">
          <g transform="translate(840 320) scale(.43367)">
            <path d="M753 1155l8 -4 5 14 8 5 2 16 8 4 4-8 12 8 10-3 4 4-6 6 14 6-4 8 14 11 34-1v4l-40 2-22 8-4 8 8 6-6 5-12-4-14-10-8-14-6-24-8-18zM812 1192l22-16-2 8-14 12zM755 1388l42 4-4 8z"/>
            <path fill="none" stroke="#fff" stroke-width="5" d="M679 288h4.600M669 495h4.600M830 500h4.600M821 523h4.600M816 529h4.600M805 537h8M798 592h4.600M775 602h4.600M770 638h4.600M766 643h4.600M830 689h4.600M734 676h4.600M734 693h4.600M706 711h4.600M706 716h4.600M697 744h4.600M692 750h4.600M686 757h4.600M669 772h4.600M651 758h4.600M637 758h8M632 763h4.600M626 768h4.600M600 768h4.600M586 776h4.600M540 800h4.600M503 814h4.600M471 832h9M434 832h9M370 832h4.600M360 827h4.600M342 814h4.600M309 827h4.600M295 823h4.600M287 818h4.600M175 800h4.600M175 813h4.600M429 634h4.600M388 657h4.600M370 671h4.600M683 792h4.600M673 796h4.600M664 801h8M655 805h8M650 810h4.600M640 816h8M623 818h8M613 823h4.600M600 841h4.600M595 847h4.600M590 853h4.600M586 858h4.600M572 864h4.600M683 860h4.600M724 878h4.600M544 887h4.600M544 930h4.600M549 952h4.600M568 965h4.600M564 970h4.600M549 994h4.600M544 1003h4.600M521 1007h4.600M544 1035h4.600M553 1150h4.600M540 1202h4.600M535 1211h4.600M530 1216h4.600M517 1239h4.600M493 1248h4.600M480 1261h4.600M470 1275h4.600M461 1284h8M452 1289h8M443 1297h4.600M438 1303h4.600M433 1309h4.600M428 1315h4.600M422 1323h4.600M422 1330h4.600M422 1337h4.600M422 1344h4.600M431 1358h4.600M431 1367h4.600M431 1376h4.600M431 1390h4.600M431 1413h4.600M434 1422h4.600M586 1294h4.600M697 1192h4.600M711 1216h4.600M725 1202h4.600M743 1207h4.600M757 1225h4.600M752 1253h4.600M766 1266h4.600M770 1280h4.600M772 1303h4.600M734 1305h8M735 1330h12M739 1325h4.600M739 1335h4.600M775 1316h4.600M794 1340h8M826 1335h4.600M864 1330h10M890 1243h4.600M881 1233h4.600M910 1340h9M1070 1192h4.600M1116 1243h4.600M1237 1183h4.600M1273 1196h4.600M1283 1271h4.600M1310 564h4.600M1334 595h4.600M1397 787h4.600M1380 1308h4.600M1393 1303h4.600M1402 1312h4.600M1402 1324h4.600M1375 1362h4.600M1502 1383h4.600M1240 1350h8"/>
          </g>
          <g transform="translate(1340 780) scale(.33333 .44)">
            <path fill="none" stroke="#fff" stroke-width="5" d="M600 357h6M637 325h6M558 402h6M570 397h6M582 470h6M540 511h6M492 552h6M534 584h6M432 586h10M444 602h6M396 602h6M378 611h6M390 638h6M360 620h6M360 636h6M894 552h6M1008 725h6M480 750h6M534 750h8M540 755h6M570 720h6M618 748h6M822 738h6M900 757h6M894 771h6M906 784h6M894 797h6M984 788h6M1038 802h6M1056 825h6M1086 843h6M1092 852h6M1092 884h6M1260 892h6M540 807h6M588 802h6M576 820h6M564 829h6M582 834h6M606 838h6M606 861h6M558 886h6M636 834h16M690 843h6M702 829h16M726 820h6M750 820h6M774 834h6M786 829h6M798 825h6M810 820h6M834 1002h6M906 993h6M924 1002h6M1002 993h6M780 1034h6M762 1061h6M786 1102h6M780 1127h6M774 1142h6M1152 1048h6M1098 1088h6M1122 1111h6M1134 1133h6M1152 1143h6M954 1170h6M1152 1196h10M1158 1206h8M1164 1252h24M1170 1265h12M1194 1270h6M1212 1265h6M1236 1261h6M1248 1266h6M1134 1284h6M1092 1306h6M900 1293h6M1404 1180h6M990 1366h6"/>
            <path fill="none" stroke="#fff" stroke-width="6.500" d="M690 1110h12v8h12v12h6v12h9l2 12h12v10h15v10h18l4 10h10M808 1210v20h10v12h-10v16h10v12h6v20h-12v12h-9v20M790 1345v20h8v25M804 1320v70h3v35h-15v10h-15M750 1452h18l10 12M800 1440v35M756 1448l18-12M776 1488v20M790 1485h18v10h-18v15h16M800 1518h15l12 6M838 1515v12h9"/>
            <path fill="none" stroke="#fff" stroke-width="5" stroke-dasharray="5 6" d="M778 1490l18 20 14-25 12 20 24 22M770 1460l30-20M366 603v60"/>
          </g>
        </g>
      </svg>
    </section>
  </main>

  <footer class="status">
    <div class="search"><svg viewBox="0 0 24 30"><circle cx="10" cy="11" r="8.500" fill="none" stroke="#999" stroke-width="2.200"/><path d="M16 18l8 8" stroke="#999" stroke-width="3"/></svg>Type to locate (Ctrl+K)</div>
    <span class="s-read">Read</span>
    <span class="clip c-coord"><em>Coordinate</em></span>
    <span class="field f-coord">107.74,15.21</span>
    <svg class="mouse" viewBox="0 0 32 34"><path d="M2 8q0-7 8-7l6 4 6 12-10 8z" fill="#555" stroke="#333"/><path d="M6 7l8 15M11 4l7 14M21 9l8-7" stroke="#eee" stroke-width="2"/><path d="M20 9l3 1 8-8M1 21l8 3" fill="none" stroke="#444" stroke-width="2" stroke-dasharray="5 2"/><ellipse cx="21" cy="24" rx="9" ry="8" fill="#ddd" stroke="#444" stroke-width="2.500"/><circle cx="21" cy="24" r="3" fill="none" stroke="#444" stroke-width="2"/></svg>
    <span class="clip c-scale"><em>Scale</em></span>
    <span class="combo f-scale">1:5,130,384<svg viewBox="0 0 18 14"><path d="M2 3l7 7 7-7" fill="none" stroke="#555" stroke-width="2"/></svg></span>
    <svg class="lock" viewBox="0 0 26 32"><path d="M6 16V9q0-7 7-7t7 7v7" fill="none" stroke="#999" stroke-width="3"/><rect x="1" y="14" width="24" height="17" rx="2" fill="#666"/></svg>
    <span class="clip c-mag"><em>Magnifier</em></span>
    <span class="spin f-mag">100%<svg viewBox="0 0 28 36"><path d="M1 1h26v16H1zM1 18h26v16H1z" fill="#f0f0f0" stroke="#aaa" stroke-width="2"/><path d="M9 12h10l-5-6zM9 23h10l-5 6z"/></svg></span>
    <span class="clip c-rot"><em>Rotation</em></span>
    <span class="spin f-rot">0.0 °<svg viewBox="0 0 28 36"><path d="M1 1h26v16H1zM1 18h26v16H1z" fill="#f0f0f0" stroke="#aaa" stroke-width="2"/><path d="M9 12h10l-5-6zM9 23h10l-5 6z"/></svg></span>
    <span class="check"><svg viewBox="0 0 26 26"><path d="M4 13l6 6L22 4" fill="none" stroke="#444" stroke-width="2.500"/></svg></span>
    <span class="s-render">Render</span>
    <svg class="globe" viewBox="0 0 32 30"><ellipse cx="16" cy="15" rx="14" ry="13" fill="#888" stroke="#777"/><path d="M3 10h26M1 15h30M4 21h24M16 1v28M16 2q-12 13 0 26M16 2q12 13 0 26" fill="none" stroke="#ddd" stroke-width="1.300"/></svg>
    <span class="s-epsg">EPSG:4326</span>
    <svg class="bubble" viewBox="0 0 34 32"><ellipse cx="17" cy="14" rx="16" ry="13" fill="#666"/><path d="M18 22l13 9-5-12z" fill="#666"/><path d="M9 13h4M15 13h4M21 13h4" stroke="#fff" stroke-width="3"/></svg>
    <svg class="puzzle" viewBox="0 0 42 44"><path d="M2 16h9q-2-7 5-8 7 1 5 8h10v10q4 3 4 0v5q-4-1-4 2v10H2V33q6 1 6-4t-6-4z" fill="#aaa" stroke="#666" stroke-width="2"/><path d="M30 1l3 6 8-2-4 7 4 6-8-1-4 5-2-8-6-2 6-4z" fill="#eee" stroke="#666" stroke-width="1.500"/></svg>
    <svg class="grip" viewBox="0 0 18 18"><path d="M12 0h4v4h-4zM6 7h4v4H6zM12 7h4v4h-4zM0 14h4v4H0zM6 14h4v4H6zM12 14h4v4h-4z" fill="#bbb"/></svg>
  </footer>
</div>
</body>
</html>
```
FILE: styles.css
```css
* { box-sizing: border-box; }
body { margin: 0; background: #000; font-family: "Noto Sans", "Open Sans", sans-serif; font-size: 21px; color: #000; overflow: hidden; }
svg { flex: none; display: block; }
.defs { position: absolute; }
.window { width: 2042px; height: 1538px; margin-left: 2px; border-left: 2px solid #1a80d9; border-top: 2px solid #1a80d9; background: #f0f0f0; display: flex; flex-direction: column; }

.titlebar { height: 60px; background: #fff; display: flex; align-items: center; padding: 0 6px 4px 16px; }
.logo { width: 32px; height: 32px; }
.app-name { margin-left: 11px; padding-top: 2px; flex: 1; }
.caption { width: 230px; height: 30px; margin-right: 12px; }
.menubar { height: 36px; background: #fff; display: flex; gap: 31.5px; padding: 3px 0 0 14px; line-height: 34px; letter-spacing: -.13px; border-bottom: 1px solid #eee; }

.toolrow { height: 68px; display: flex; border-bottom: 2px solid #b4b4b4; flex: none; border-top: 2px solid #fff; }
.menubar + .toolrow { margin-top: 2px; }
.bar { display: flex; align-items: center; flex: none; border-right: 2px solid #b4b4b4; box-shadow: inset 2px 0 #fff; padding-left: 18px; position: relative; }
.bar::before { content: ""; position: absolute; left: 8px; top: 6px; width: 4px; height: 54px; background: repeating-linear-gradient(#b5b5b5 0 3px, #fff 3px 5px, transparent 5px 8.3px); }
.ic { width: 48px; height: 48px; margin: 0 7px; }
.dd { width: 25px; height: 48px; }
.more { width: 18px; height: 14px; margin-left: auto; margin-right: 4px; }
.pressed { width: 62px; height: 58px; border: 2px solid #90c8f6; background: #c0dcf3; display: flex; align-items: center; }
.pressed .ic { margin: 0 5px; }
.w-file { width: 396px; }
.w-nav { width: 892px; padding-left: 20px; }
.w-attr { flex: 1; border-right: 0; padding-left: 18px; }
.w-attr .more { margin-right: 6px; }
.w-src { width: 334px; padding-left: 19px; }
.w-edit { width: 792px; padding-left: 19px; }
.w-label { width: 474px; padding-left: 20px; }
.w-label .ic { margin-top: 6px; }
.w-plug { width: 110px; padding-left: 18px; }
.w-plug .ic { margin-right: 0; }
.w-plug .more, .w-plug3 .more { margin-right: 4px; }
.w-help { width: 85px; padding-left: 19px; }
.w-end { flex: 1; border-right: 0; }
.w-ptr { width: 86px; }
.w-thin { width: 24px; padding: 0; }
.w-scp { width: 582px; padding-left: 27px; gap: 14px; }
.w-roi { width: 1150px; padding-left: 19px; }
.w-roi .ic { margin: 0 8px; }
.w-plug3 { width: 112px; padding-left: 21px; }
.w-plug3 .ic { margin-right: 0; }
.w-last { flex: 1; border-right: 0; padding-left: 19px; }
.tile { width: 48px; height: 48px; line-height: 48px; text-align: center; font-size: 23px; overflow: hidden; }
.t-ad { background: #ffb8c4; color: #f22; -webkit-text-stroke: .6px #f22; }
.t-mo { background: #d2d2d2; color: #b8b8b8; }
.t-ro { background: #848484; color: #b0b0b0; }
.t-sc { background: #e2e2e2; color: #8c8c8c; }
.t-adj { background: #868686; color: #ccc; letter-spacing: 1px; }
.t-2p { background: #c3c3c3; color: #aaa; }
.t-tm { background: #fff; color: #777; letter-spacing: 3px; }
.t-tp { background: #5a5a5a; color: #ddd; letter-spacing: 1px; }
.t-ex { background: #d5d5d5; color: #aaa; letter-spacing: 6px; padding-left: 5px; }
.dark { height: 34px; width: 114px; margin-left: 2px; background: linear-gradient(90deg, #4a4a4a, #9c9c9c); color: #f4f4f4; display: flex; align-items: center; gap: 13px; padding-left: 2px; font-size: 20px; letter-spacing: -.3px; white-space: nowrap; }
.roi { margin-left: 0; }
.radio { width: 22px; height: 22px; border-radius: 50%; border: 5px solid #fff; background: #333; flex: none; }
.combo { height: 40px; background: #fff; border: 2px solid #7a7a7a; display: flex; align-items: center; justify-content: space-between; padding: 0 6px; flex: none; }
.combo svg { width: 18px; height: 14px; }
.w-rgb { width: 160px; padding-right: 7px; }
.dist { margin-left: 5px; padding-top: 2px; }
.one { font: bold 16px "Noto Sans", sans-serif; text-anchor: middle; letter-spacing: -1px; fill: #333; }
.info { font: italic bold 30px "Liberation Serif", serif; text-anchor: middle; fill: #fff; }
.info-s { font: italic bold 23px "Liberation Serif", serif; text-anchor: middle; fill: #fff; }
.abc { font: bold 16px "Open Sans", sans-serif; text-anchor: middle; fill: #777; }
.abc.on { fill: #444; }
.help { font: 30px "Liberation Serif", serif; text-anchor: middle; fill: #fff; }
.pct { font: bold 30px "Liberation Sans", sans-serif; text-anchor: middle; fill: #111; }

.work { flex: 1; display: flex; min-height: 0; }
.docks { width: 634px; margin-right: 8px; display: flex; flex-direction: column; }
.dock { display: flex; flex-direction: column; }
.browser { height: 586px; padding-top: 2px; }
.layers { flex: 1; margin-top: 10px; }
.dock h2 { margin: 0; height: 38px; font-size: 21px; font-weight: 400; letter-spacing: -.3px; border: 2px solid #b8b8b8; background: #dadada; padding: 4px 0 0 6px; line-height: 32px; display: flex; align-items: center; justify-content: space-between; }
.dockbtns { width: 52px; height: 20px; margin: -6px 5px 0 0; }
.docktools { height: 56px; display: flex; align-items: center; padding: 4px 0 0 10px; gap: 14px; }
.docktools svg { width: 32px; height: 36px; }
.docktools .dd { width: 26px; height: 48px; margin: 0 -8px; }
.tree { flex: 1; min-height: 0; border: 2px solid #828790; background: #fff; display: flex; overflow: hidden; }
.rows { flex: 1; overflow: hidden; }
.row { height: 40px; display: flex; align-items: center; letter-spacing: -.27px; white-space: nowrap; padding-left: 10px; }
.row > span { padding-top: 4px; }
.row .tight { letter-spacing: -.9px; }
.row.sub { padding-left: 50px; }
.exp { width: 18px; height: 18px; margin: -2px 18px 0 0; }
.fi { width: 32px; height: 34px; margin: -1px 11px 0 0; }
.scroll { width: 32px; background: #f0f0f0; display: flex; flex-direction: column; }
.scroll svg { height: 33px; width: 30px; margin-left: -1px; }
.scroll i { background: #cdcdcd; height: 192px; margin-bottom: auto; }
.layer .exp { margin-right: 12px; }
.sel { flex: 1; height: 40px; background: #d9d9d9; display: flex; align-items: center; padding-left: 6px; }
.sel b { text-decoration: underline; text-underline-offset: 4px; text-decoration-thickness: 2px; text-decoration-skip-ink: none; letter-spacing: 1.2px; margin-left: 11px; padding-top: 3px; }
.check { width: 26px; height: 26px; border: 2px solid #333; background: #fff; flex: none; }
.check svg { width: 22px; height: 22px; }
.raster { width: 32px; height: 32px; margin-left: 12px; margin-top: -3px; }
.legend { padding-left: 86px; letter-spacing: .35px; }
.legend i { width: 32px; height: 32px; margin-right: 11px; margin-top: -4px; }
.swatch { background: #000; }
.canvas { flex: 1; border: 2px solid #828790; background: #fff; min-width: 0; }
.map { width: 100%; height: 100%; }

.status { height: 56px; display: flex; align-items: center; padding: 4px 0 0 8px; flex: none; letter-spacing: -.1px; white-space: nowrap; }
.search { width: 400px; height: 40px; background: #fff; border: 2px solid #7a7a7a; color: #777; display: flex; align-items: center; padding: 2px 0 0 16px; gap: 15px; letter-spacing: .3px; flex: none; }
.search svg { width: 24px; height: 30px; margin-top: -6px; }
.s-read { width: 53px; margin-left: 15px; padding-top: 2px; letter-spacing: .3px; }
.clip { overflow: hidden; display: flex; justify-content: center; height: 34px; line-height: 36px; flex: none; }
.clip em { font-style: normal; }
.c-coord { width: 86px; margin-left: 16px; }
.field, .spin { height: 40px; background: #fff; border: 2px solid #7a7a7a; display: flex; align-items: center; justify-content: space-between; padding-left: 5px; flex: none; }
.field { letter-spacing: .75px; }
.f-coord { width: 152px; margin-left: 6px; padding-top: 2px; }
.mouse { width: 32px; height: 34px; margin: -4px 0 0 6px; }
.c-scale { width: 29px; margin-left: 26px; letter-spacing: -.6px; }
.c-scale em { margin-left: -6px; }
.f-scale { width: 172px; margin-left: 6px; padding: 2px 8px 0 4px; letter-spacing: .6px; }
.lock { width: 26px; height: 32px; margin-left: 9px; }
.c-mag { width: 69px; margin-left: 28px; }
.f-mag { width: 164px; margin-left: 6px; }
.spin svg { width: 28px; height: 36px; }
.c-rot { width: 64px; margin-left: 18px; }
.f-rot { width: 160px; margin-left: 16px; }
.status > .check { margin-left: 12px; }
.s-render { margin-left: 8px; width: 70px; }
.globe { width: 32px; height: 30px; margin-left: 36px; }
.s-epsg { margin-left: 6px; width: 108px; padding-top: 2px; letter-spacing: .2px; }
.bubble { width: 34px; height: 32px; margin-left: 31px; }
.puzzle { width: 42px; height: 44px; margin: -4px 0 0 25px; }
.grip { width: 18px; height: 18px; margin: 28px 2px 0 auto; }
```
